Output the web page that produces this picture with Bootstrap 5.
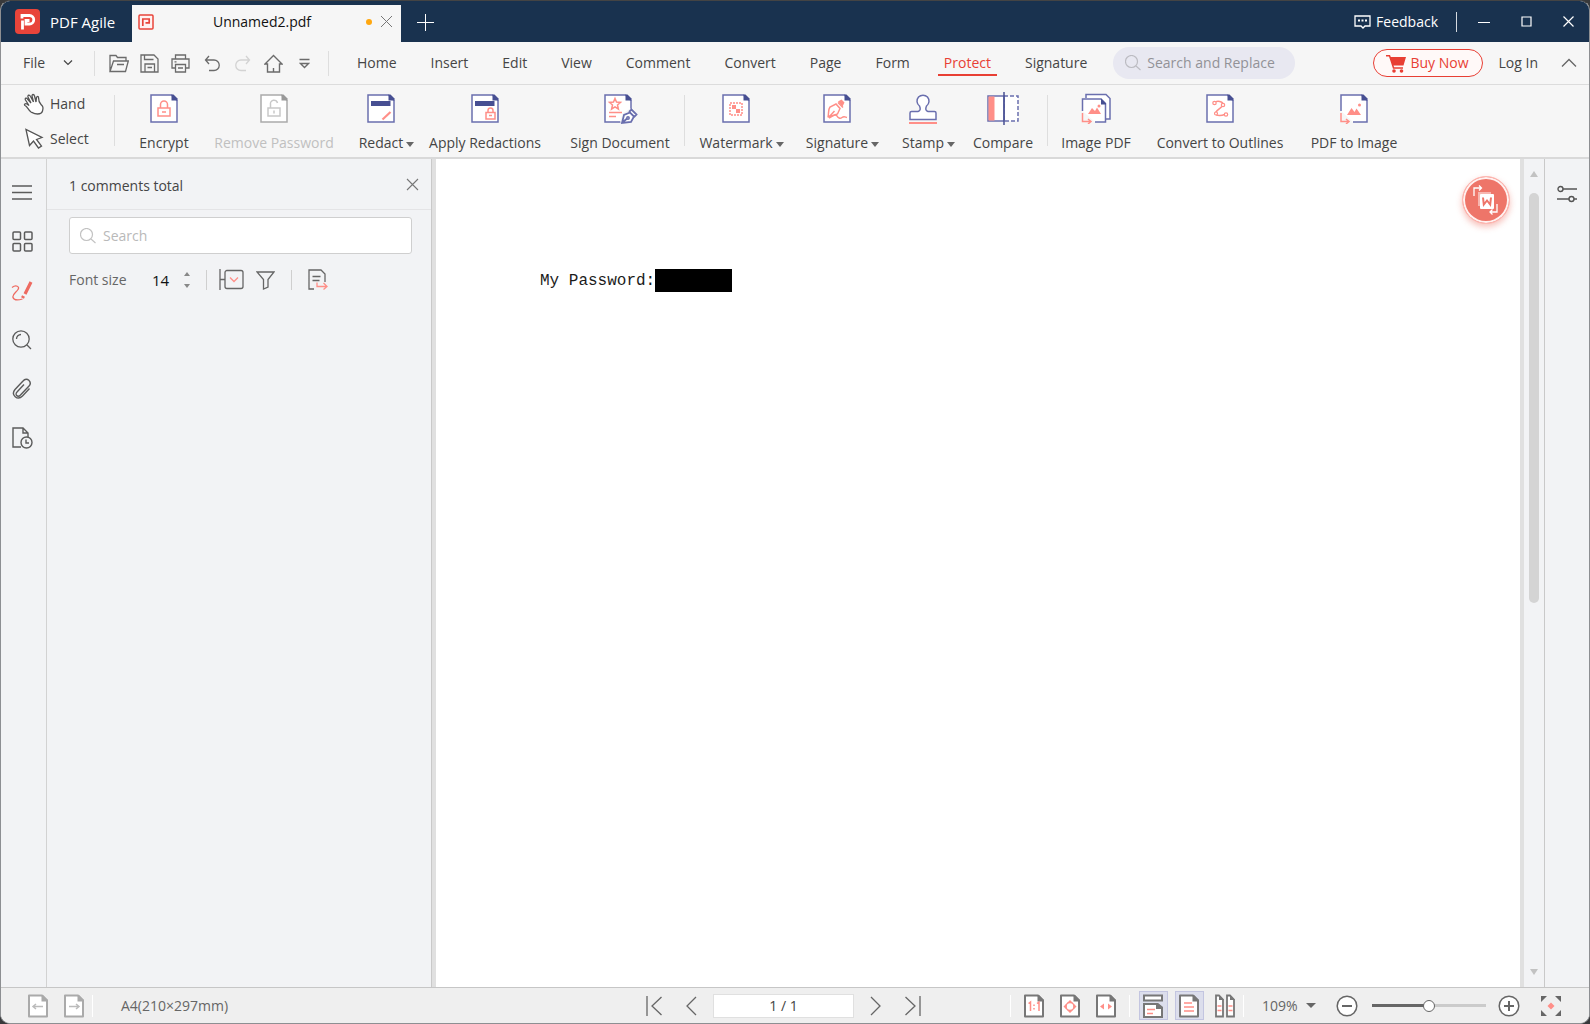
<!DOCTYPE html>
<html lang="en">
<head>
<meta charset="utf-8">
<meta name="viewport" content="width=device-width, initial-scale=1">
<title>PDF Agile</title>
<link rel="stylesheet" href="https://cdn.jsdelivr.net/npm/bootstrap@5.3.0/dist/css/bootstrap.min.css">
<style>
  :root { --ink:#454545; --coral:#ff8f88; --indigo:#6a6fae; --indigo-dark:#474f92; --red:#e83f34; --line:#d2d2d2; --soft:#f2f3f5; }
  html { background:#38393b; }
  body { font:14px/20px "Open Sans","Noto Sans",sans-serif; color:var(--ink); background:#38393b; height:100vh; overflow:hidden; }
  button, input, select { font:inherit; color:inherit; }
  svg { display:block; flex:none; }
  svg:not([fill]) { fill:none; }
  svg:not([stroke]) { stroke:currentColor; }
  svg:not([stroke-width]) { stroke-width:1.5; }
  .plain { border:0; background:none; padding:0; }
  .app-window { height:100vh; border:1px solid #8d8f92; border-top-color:#444; border-radius:10px; overflow:hidden; background:#f6f6f6; }

  .title-bar { height:41px; background:#19324f; color:#fff; }
  .brand-box { width:131px; padding-left:14px; gap:10px; font-size:15px; }
  .doc-tab { width:269px; height:37px; background:#f6f6f6; color:#111; padding:0 8px 4px 6px; }
  .dirty-dot { width:6px; height:6px; border-radius:50%; background:#ffa70f; margin-right:8px; }
  .new-tab { width:48px; height:40px; }
  .title-rule { width:1px; height:20px; background:#d5dae0; margin:0 6px 0 18px; }
  .win-btn { width:42px; height:40px; }

  .menu-bar { height:43px; border-bottom:1px solid #dcdcdc; }
  .file-btn { padding-left:22px; width:93px; gap:18px; }
  .v-rule { width:1px; background:#dedede; flex:none; }
  .v-rule.short { height:20px; background:#cfcfcf; }
  .v-rule.mid { height:25px; }
  .v-rule.tall { height:51px; margin-top:10px; }
  .quick { width:31px; height:31px; color:#6b6b6b; }
  .quick:disabled { color:#d3d3d3; }
  .menu-tabs { gap:22px; padding-left:22px; }
  .menu-tabs .nav-link { padding:3px 6px 1px; color:var(--ink); border-bottom:2px solid transparent; line-height:20px; }
  .menu-tabs .nav-link.active { color:var(--red); border-color:var(--red); }
  .pill-search { width:182px; height:32px; border-radius:16px; background:#e8e8f1; padding:0 4px 0 12px; margin-left:20px; gap:6px; color:#bcbcc2; }
  .pill-search input, .note-search input { min-width:0; flex:1; border:0; background:none; outline:0; padding:0; }
  .pill-search input::placeholder { color:#929297; opacity:1; }
  .buy-btn { width:110px; height:28px; border:1px solid var(--red); border-radius:14px; color:var(--red); background:#fff9f8; gap:4px; padding:0; }
  .collapse-btn { margin:0 12px 0 23px; color:#666; }

  .ribbon { height:74px; border-bottom:2px solid #d9d9d9; }
  .mode-col { width:113px; padding:1px 0 0 22px; }
  .mode-btn { height:35px; gap:4px; color:#555; }
  .mode-btn span { color:var(--ink); }
  .first-tools { margin-left:13px; }
  .tool { height:67px; color:var(--indigo); }
  .tool span { display:block; margin-top:9px; color:var(--ink); white-space:nowrap; }
  .tool .caret::after { content:""; display:inline-block; border:4px solid transparent; border-top:5px solid #666; border-bottom:0; margin:0 -11px 1px 3px; }
  .tool:disabled { color:#aaa; --coral:#c8c8c8; --indigo-dark:#999; }
  .tool:disabled span { color:#c0c0c0; }
  .t-66 { width:66px; } .t-72 { width:72px; } .t-88 { width:88px; } .t-96 { width:96px; } .t-100 { width:100px; } .t-102 { width:102px; }
  .t-116 { width:116px; } .t-128 { width:128px; } .t-142 { width:142px; } .t-148 { width:148px; } .t-152 { width:152px; }

  .body-row { min-height:0; }
  .rail { width:46px; background:var(--soft); border-right:1px solid var(--line); padding-top:9px; flex:none; }
  .rail button { width:42px; height:49px; color:#5b5b5b; }
  .notes { width:385px; background:var(--soft); border-right:1px solid #c9c9c9; flex:none; }
  .notes-head { height:51px; border-bottom:1px solid #e4e4e6; padding:0 12px 0 22px; }
  .note-search { margin:7px 19px 0 22px; height:37px; background:#fff; border:1px solid #cfcfcf; border-radius:3px; padding:0 10px; gap:7px; color:#c2c2c2; }
  .note-search input::placeholder { color:#b9b9b9; opacity:1; }
  .note-tools { height:51px; padding-left:22px; color:#666; }
  .size-input { width:30px; border:0; background:none; color:#111; padding:0; margin-left:19px; text-align:center; font-size:15px; appearance:textfield; -moz-appearance:textfield; }
  .size-input::-webkit-inner-spin-button { appearance:none; -webkit-appearance:none; }
  .page-area { background:#fff; border-left:4px solid #e0e0e0; border-right:4px solid #e0e0e0; min-width:0; }
  .page-line { margin:110px 0 0 104px; font:16px/25px "Liberation Mono",monospace; color:#1b1b1b; }
  .redacted { display:inline-block; width:77px; height:23px; background:#000; vertical-align:top; }
  .float-btn { top:17px; right:10px; width:48px; height:48px; border-radius:50%; background:#ee7569; border:1px solid #ffb9b3; box-shadow:inset 0 0 0 2px #fff1f0, 0 3px 6px rgba(238,117,105,.45); color:#fff; padding:0; }
  .scroll-col { width:21px; background:var(--soft); border-right:1px solid #c9c9c9; padding:12px 0 12px; color:#c2c2c2; flex:none; }
  .scroll-track { flex:1; width:10px; margin:16px 0 16px; }
  .scroll-thumb { width:10px; height:54%; border-radius:5px; background:#d4d4d4; }
  .side-rail { width:44px; background:var(--soft); padding-top:10px; flex:none; }
  .side-rail button { width:44px; height:49px; color:#555; }

  .status-bar { height:36px; border-top:1px solid #c6c6c6; background:#efefef; color:#666; flex:none; }
  .status-left { padding-left:19px; }
  .paper-size { margin-left:28px; }
  .pager { gap:22px; margin-right:84px; }
  .status-btn { width:36px; height:30px; color:#777; }
  .status-btn i { width:29px; height:29px; border:1px solid transparent; display:flex; align-items:center; justify-content:center; }
  .status-btn.on i { background:#dcdeec; border-color:#c3c5e0; }
  .light-rule { width:1px; height:22px; background:#fff; }
  .light-rule.spaced { margin:0 5px; }
  .page-input { width:141px; height:24px; border:1px solid #e0e0e0; background:#fff; text-align:center; color:#444; padding:0; margin:0 -6px; }
  .zoom-select { width:60px; border:0; appearance:none; background:none; padding:0 6px 0 0; margin-left:18px; outline:0; }
  .zoom-caret { margin-left:-16px; pointer-events:none; }
  .zoom-range { appearance:none; -webkit-appearance:none; width:114px; height:14px; margin:0 12px 0 14px; background:linear-gradient(#666,#666) 0 50%/50% 3px no-repeat, linear-gradient(#cbcbcb,#cbcbcb) 0 50%/100% 3px no-repeat; }
  .zoom-range::-webkit-slider-thumb { -webkit-appearance:none; width:12px; height:12px; border-radius:50%; background:#fff; border:1px solid #666; }
  .full-btn { margin:0 27px 0 20px; }
</style>
<script src="https://cdn.jsdelivr.net/npm/bootstrap@5.3.0/dist/js/bootstrap.bundle.min.js"></script>
</head>
<body>
<svg width="0" height="0" class="position-absolute">
  <symbol id="doc" viewBox="0 0 32 32"><path d="M3 3h20.500l5.500 5.500v21.500H3z" fill="#fff" stroke="currentColor" stroke-width="1.500"/><path d="M23.500 2.500h2l4 4v2h-6z" fill="var(--indigo-dark)" stroke="none"/></symbol>
  <symbol id="page" viewBox="0 0 22 24"><path d="M2 1.500h13l5 5v16H2z" fill="#fff" stroke="currentColor" stroke-width="2" stroke-linejoin="round"/><path d="M14.500 1h1.500l5 5v1.500h-6.500z" fill="currentColor" stroke="none"/></symbol>
  <symbol id="lens" viewBox="0 0 16 16"><circle cx="6.500" cy="6.500" r="6" stroke="currentColor" stroke-width="1.200"/><path d="M11 11l4.500 4" stroke="currentColor" stroke-width="1.200"/></symbol>
</svg>

<div class="app-window d-flex flex-column">
  <header class="title-bar d-flex align-items-end flex-shrink-0">
    <div class="brand-box d-flex align-items-center align-self-center">
      <svg width="25" height="25" viewBox="0 0 25 25" stroke="none"><rect width="25" height="25" rx="4" fill="#e8443a"/><path d="M7 9.500V6.500h7.500a4 4 0 0 1 0 8.500H11v-3.500h3.500M7.500 11.500v9" stroke="#fff" stroke-width="2.800"/></svg>
      <span>PDF Agile</span>
    </div>
    <div class="doc-tab d-flex align-items-center">
      <svg width="16" height="16" viewBox="0 0 16 16" stroke="#e8443a"><rect x="1" y="1" width="14" height="14" rx="1" fill="#fff2f1"/><path d="M4.800 12V5M4 5h8M11.200 5v3.800M12 8.800H7.500" stroke-width="1.700"/></svg>
      <span class="flex-grow-1 text-center ps-1">Unnamed2.pdf</span>
      <span class="dirty-dot"></span>
      <button class="plain" aria-label="Close tab"><svg width="13" height="13" viewBox="0 0 13 13" stroke="#777" stroke-width="1"><path d="M1 1l11 11M12 1L1 12"/></svg></button>
    </div>
    <button class="plain new-tab d-flex align-items-center justify-content-center" aria-label="New tab"><svg width="17" height="17" viewBox="0 0 17 17" stroke-width="1" stroke="#fff"><path d="M8.500 0v17M0 8.500h17"/></svg></button>
    <div class="ms-auto d-flex align-items-center align-self-center">
      <button class="plain d-flex align-items-center text-white gap-1"><svg width="18" height="16" viewBox="0 0 18 16" stroke-width="1.300"><path d="M1 2h15v10h-5l-2 2-2-2H1z"/><path d="M4 6.500h2M7.500 6.500h2M11 6.500h2" stroke-width="2"/></svg>Feedback</button>
      <span class="title-rule"></span>
      <button class="plain win-btn d-flex align-items-center justify-content-center text-white" aria-label="Minimize"><svg width="12" height="12" viewBox="0 0 12 12"><path d="M0 6.500h12" stroke-width="1"/></svg></button>
      <button class="plain win-btn d-flex align-items-center justify-content-center text-white" aria-label="Maximize"><svg width="11" height="11" viewBox="0 0 11 11"><path d="M1 1h9v9H1z" stroke-width="1.200"/></svg></button>
      <button class="plain win-btn d-flex align-items-center justify-content-center text-white" aria-label="Close"><svg width="11" height="11" viewBox="0 0 11 11"><path d="M.5.5l10 10M10.500.5l-10 10" stroke-width="1.200"/></svg></button>
    </div>
  </header>

  <nav class="menu-bar d-flex align-items-center flex-shrink-0" aria-label="Main">
    <button class="plain file-btn d-flex align-items-center">File<svg width="10" height="8" viewBox="0 0 10 8" stroke-width="1.200"><path d="M1 1.500l4 4 4-4"/></svg></button>
    <span class="v-rule mid"></span>
    <div class="d-flex ps-2">
      <button class="plain quick d-flex align-items-center justify-content-center" aria-label="Open"><svg width="20" height="19" viewBox="0 0 20 19" stroke-width="1.300"><path d="M1 17.500V1.500h6l1.500 2H17V7M1 17.500L4.500 7H19.300l-2.800 10.500zM8 10.500h7"/></svg></button>
      <button class="plain quick d-flex align-items-center justify-content-center" aria-label="Save"><svg width="19" height="19" viewBox="0 0 19 19" stroke-width="1.300"><path d="M1 1h13l4 4v13H1zM4.500 1v4.500h9M5 18v-8h9.500v8M7.500 13.500h4.500"/></svg></button>
      <button class="plain quick d-flex align-items-center justify-content-center" aria-label="Print"><svg width="19" height="19" viewBox="0 0 19 19" stroke-width="1.300"><path d="M4.500 5V1h10v4M4.500 14H1V5h17v9h-3.500M4.500 10.500h10V18h-10zM7 14h5M3.500 7.800h2"/></svg></button>
      <button class="plain quick d-flex align-items-center justify-content-center" aria-label="Undo"><svg width="16" height="17" viewBox="0 0 16 17" stroke-width="1.300"><path d="M5 1L1.500 5 5 9M1.500 5H10a5 5 0 0 1 0 10.500H5"/></svg></button>
      <button class="plain quick d-flex align-items-center justify-content-center" aria-label="Redo" disabled><svg width="16" height="17" viewBox="0 0 16 17" stroke-width="1.300"><path d="M11 1l3.500 4L11 9M14.500 5H6a5 5 0 0 0 0 10.500h5"/></svg></button>
      <button class="plain quick d-flex align-items-center justify-content-center" aria-label="Start page"><svg width="19" height="19" viewBox="0 0 19 19" stroke-width="1.400"><path d="M3.500 10H1L9.500 1.500 18 10h-2.500v8h-12zM9.500 18v-4"/></svg></button>
      <button class="plain quick d-flex align-items-center justify-content-center" aria-label="More"><svg width="11" height="11" viewBox="0 0 11 11" stroke-width="1.300"><path d="M.5 1.500h10M1.500 5.500h8l-4 4z"/></svg></button>
    </div>
    <span class="v-rule mid ms-2"></span>
    <div class="nav menu-tabs flex-nowrap">
      <a class="nav-link" href="#">Home</a><a class="nav-link" href="#">Insert</a><a class="nav-link" href="#">Edit</a><a class="nav-link" href="#">View</a><a class="nav-link" href="#">Comment</a><a class="nav-link" href="#">Convert</a><a class="nav-link" href="#">Page</a><a class="nav-link" href="#">Form</a><a class="nav-link active" href="#" aria-current="page">Protect</a><a class="nav-link" href="#">Signature</a>
    </div>
    <label class="pill-search d-flex align-items-center"><svg width="16" height="16"><use href="#lens"/></svg><input type="text" placeholder="Search and Replace" aria-label="Search and Replace"></label>
    <div class="ms-auto d-flex align-items-center">
      <button class="buy-btn d-flex align-items-center justify-content-center"><svg width="20" height="19" viewBox="0 0 20 19" fill="currentColor" stroke="none"><path d="M0 1h4l.8 2H20l-2.500 8.500H7.500l.6 1.800H17v1.500H7L3 2.500H0z"/><circle cx="8" cy="17" r="1.800"/><circle cx="15.500" cy="17" r="1.800"/></svg>Buy Now</button>
      <a href="#" class="text-reset text-decoration-none ms-3">Log In</a>
      <button class="plain collapse-btn" aria-label="Collapse ribbon"><svg width="16" height="10" viewBox="0 0 16 10" stroke-width="1.300"><path d="M1 8.500l7-7 7 7"/></svg></button>
    </div>
  </nav>

  <section class="ribbon d-flex flex-shrink-0" aria-label="Protect tools">
    <div class="mode-col">
      <button class="plain mode-btn d-flex align-items-center"><svg width="23" height="22" viewBox="0 0 23 22" stroke-width="1.300"><path d="M8 19C5 17 4.500 13.500 2 12.500c-1.500-1 .5-2.500 2-1.500l2 1.500L2.500 7C1.500 5 3.500 4.500 4.500 6L8 10 5 4C4.500 2 6.500 1.500 7.500 3.500l3 5.500-1.500-6c0-2 2-2 2.500 0l1.500 6 .5-4.500c.5-1.500 2-1.500 2 0 0 3 .5 5 2.500 7s2.500 3 1.500 6.500c-.5 2-2 3-5 3S10 20 8 19z" fill="#fff"/></svg><span>Hand</span></button>
      <button class="plain mode-btn d-flex align-items-center"><svg width="23" height="22" viewBox="0 0 23 22" stroke-width="1.300"><path d="M3 1.500l3.500 16 4-4.500 5 7 3-2-5-6.500 5.500-2z" fill="#fff"/></svg><span>Select</span></button>
    </div>
    <span class="v-rule tall"></span>
    <div class="d-flex first-tools pt-1">
      <button class="plain tool t-72"><svg class="mx-auto" width="32" height="32"><use href="#doc"/><g stroke="var(--coral)"><path d="M10 16h12v8H10zM12.500 16v-3.500a3.500 3.500 0 0 1 7 0V16M14 20h4"/></g></svg><span>Encrypt</span></button>
      <button class="plain tool t-148" disabled><svg class="mx-auto" width="32" height="32"><use href="#doc"/><g stroke="var(--coral)"><path d="M10 16h12v8H10zM12.500 16v-3.500a3.500 3.500 0 0 1 7-1.500M16 18.500v3"/></g></svg><span>Remove Password</span></button>
      <button class="plain tool t-66"><svg class="mx-auto" width="32" height="32"><use href="#doc"/><path d="M6 11.500h19.500" stroke="var(--indigo-dark)" stroke-width="5"/><path d="M17.500 27.500l8-7.500" stroke="var(--coral)" stroke-width="2.200"/></svg><span class="caret">Redact</span></button>
      <button class="plain tool t-142"><svg class="mx-auto" width="32" height="32"><use href="#doc"/><path d="M6 11.500h19.500" stroke="var(--indigo-dark)" stroke-width="5"/><path d="M17 20.500h9V27h-9zM19 20.500v-2a2.500 2.500 0 0 1 5 0v2M20 23.500h3" stroke="var(--coral)"/></svg><span>Apply Redactions</span></button>
      <button class="plain tool t-128"><svg class="mx-auto overflow-visible" width="32" height="32"><use href="#doc" x="-2"/><path d="M11 6.500l1.500 3.500 4 .4-3 2.600.9 4-3.400-2.200L7.600 17l.9-4-3-2.600 4-.4zM5 20.500h13M5 24.500h7" stroke="var(--coral)"/><path d="M18 31l2-8 6-4 4 4-3 6-8.500 3" fill="#f6f6f6" stroke="#f6f6f6" stroke-width="4"/><path d="M18 31l2-8 6-2.500 4 4L27 30zM25 20l2.500-2.500 5 5-2.500 2.500M18 31l5-4.500" fill="#fff" stroke-width="1.800"/><circle cx="24" cy="26" r="1.200"/></svg><span>Sign Document</span></button>
    </div>
    <span class="v-rule tall"></span>
    <div class="d-flex pt-1">
      <button class="plain tool t-102"><svg class="mx-auto" width="32" height="32"><use href="#doc"/><rect x="10" y="11" width="12" height="12" stroke="var(--coral)" stroke-dasharray="2 1"/><path d="M12 13h4v4h4v4h-4v-4h-4z" fill="var(--coral)" stroke="none"/></svg><span class="caret">Watermark</span></button>
      <button class="plain tool t-100"><svg class="mx-auto" width="32" height="32"><use href="#doc"/><path d="M7 25.500c1-5 0-8 2-10.500l6-3 4 4.500-2.500 5.500L7.500 25M8 25l5.500-6M17 10.500l5 5" stroke="var(--coral)"/><path d="M17 9.500l3.500-2 3 3-2 4z" fill="var(--coral)" stroke="none"/><path d="M8 26c5-3 7-4 8-2s3 3 5 1.500 3-.5 5 0" stroke="var(--coral)"/></svg><span class="caret">Signature</span></button>
      <button class="plain tool t-72"><svg class="mx-auto" width="32" height="32" viewBox="0 0 32 32"><path d="M3 27.500v-6.500q0-1.500 1.500-1.500H11q3.500-1 1.500-5.500a6 6 0 1 1 7 0q-2 4.500 1.500 5.500h6.500q1.500 0 1.500 1.500v6.500z" fill="#fff"/><path d="M2 31h28" stroke="var(--coral)" stroke-width="2"/></svg><span class="caret">Stamp</span></button>
      <button class="plain tool t-88"><svg class="mx-auto overflow-visible" width="32" height="32" viewBox="0 0 32 32"><path d="M17 4h14v25H17z" fill="#fff" stroke-dasharray="4 2"/><path d="M1 4h16v25H1z" fill="#fff"/><path d="M1.500 4.500h6v24h-6z" fill="var(--coral)" stroke="none"/><path d="M17 0v33" stroke="var(--indigo-dark)"/></svg><span>Compare</span></button>
    </div>
    <span class="v-rule tall"></span>
    <div class="d-flex pt-1">
      <button class="plain tool t-96"><svg class="mx-auto" width="32" height="32" viewBox="0 0 32 32"><path d="M6 6V2.500h20l4 4V27h-4" fill="#fff"/><path d="M2.500 19V7H21l4.500 4.500V30H15" fill="#fff"/><path d="M21 6.500l5 5v1h-5z" fill="var(--indigo-dark)" stroke="none"/><path d="M8 22l4-6 3 3 2-3.500 4 6.500z" fill="var(--coral)" stroke="none"/><circle cx="19" cy="14" r="1.500" fill="var(--coral)" stroke="none"/><path d="M2.500 21v8.500H10M8 27l3 2.500L8 32" stroke="var(--coral)"/></svg><span>Image PDF</span></button>
      <button class="plain tool t-152"><svg class="mx-auto" width="32" height="32"><use href="#doc"/><path d="M10 11c3-3 9-1.500 9 1.500S10 19 11.500 22c1 2 6 2 9 .5" stroke="var(--coral)"/><g fill="#fff" stroke="var(--coral)" stroke-width="1.200"><circle cx="10.500" cy="11" r="1.700"/><circle cx="19" cy="13" r="1.700"/><circle cx="12" cy="21.500" r="1.500"/><circle cx="22" cy="22.500" r="1.700"/></g></svg><span>Convert to Outlines</span></button>
      <button class="plain tool t-116"><svg class="mx-auto" width="32" height="32" viewBox="0 0 32 32"><path d="M3 19V3h20.500L29 8.500V30H15" fill="#fff"/><path d="M23.500 2.500h2l4 4v2h-6z" fill="var(--indigo-dark)" stroke="none"/><path d="M9 23l4.500-7 3 4 2-3.500 4.500 6.500z" fill="var(--coral)" stroke="none"/><circle cx="21.500" cy="13" r="1.500" fill="var(--coral)" stroke="none"/><path d="M3 21v8.500h7M8 27l3 2.500L8 32" stroke="var(--coral)"/></svg><span>PDF to Image</span></button>
    </div>
  </section>

  <main class="body-row d-flex flex-grow-1">
    <div class="rail d-flex flex-column">
      <button class="plain d-flex align-items-center justify-content-center" aria-label="Menu"><svg width="20" height="15" viewBox="0 0 20 15" stroke-width="1.300"><path d="M0 1h20M0 7.500h20M0 14h20"/></svg></button>
      <button class="plain d-flex align-items-center justify-content-center" aria-label="Thumbnails"><svg width="21" height="21" viewBox="0 0 21 21"><rect x="1" y="1" width="7.500" height="7.500" rx="1"/><rect x="12.500" y="1" width="7.500" height="7.500" rx="1"/><rect x="1" y="12.500" width="7.500" height="7.500" rx="1"/><rect x="12.500" y="12.500" width="7.500" height="7.500" rx="1"/></svg></button>
      <button class="plain d-flex align-items-center justify-content-center" aria-label="Comments"><svg width="22" height="20" viewBox="0 0 22 20" stroke="#ee6a61"><path d="M1 6.500c4-3 8-1 6 2s-6 5-5 8 6 2.500 9.500 1.500" stroke-width="1.300"/><path d="M20 1l-6 12M12.500 15l-1 2" stroke-width="3.200"/></svg></button>
      <button class="plain d-flex align-items-center justify-content-center" aria-label="Search"><svg width="20" height="20" viewBox="0 0 20 20" stroke-width="1.300"><circle cx="9" cy="9" r="8.200"/><path d="M15 15l4 4M4.500 9A4.500 4.500 0 0 1 9 4.500"/></svg></button>
      <button class="plain d-flex align-items-center justify-content-center" aria-label="Attachments"><svg width="20" height="21" viewBox="0 0 20 21" stroke-width="1.400"><path d="M17.500 10.500l-7 7.500c-5 5-12-1-7.500-6.500l8-8.500c4-4.500 9.500 1 6 5l-8.500 9c-3 3-6-.5-3.500-3l7-7.500"/></svg></button>
      <button class="plain d-flex align-items-center justify-content-center" aria-label="History"><svg width="21" height="22" viewBox="0 0 21 22" stroke-width="1.400"><path d="M9 20H1V1h10l5 5v4M11 1v5h5"/><circle cx="14.500" cy="15.500" r="5.500" fill="#f2f3f5"/><path d="M14 12.500V16h3"/></svg></button>
    </div>

    <aside class="notes">
      <div class="notes-head d-flex align-items-center justify-content-between"><span class="pt-1">1 comments total</span><button class="plain" aria-label="Close panel"><svg width="13" height="13" viewBox="0 0 13 13" stroke="#777" stroke-width="1.100"><path d="M1 1l11 11M12 1L1 12"/></svg></button></div>
      <label class="note-search d-flex align-items-center"><svg width="16" height="16"><use href="#lens"/></svg><input type="text" placeholder="Search" aria-label="Search comments"></label>
      <div class="note-tools d-flex align-items-center">
        <label for="fontSize">Font size</label>
        <input id="fontSize" class="size-input" type="number" value="14">
        <div class="d-flex flex-column gap-2 ms-2">
          <button class="plain" aria-label="Larger"><svg width="6" height="4" viewBox="0 0 6 4"><path d="M0 4l3-4 3 4z" fill="#888" stroke="none"/></svg></button>
          <button class="plain" aria-label="Smaller"><svg width="6" height="4" viewBox="0 0 6 4"><path d="M0 0l3 4 3-4z" fill="#888" stroke="none"/></svg></button>
        </div>
        <span class="v-rule short ms-3"></span>
        <button class="plain ms-2 ps-1" aria-label="Expand all"><svg width="25" height="21" viewBox="0 0 25 21" stroke-width="1.300"><path d="M1 0v21M1 10.500h5"/><rect x="6" y="1.500" width="18" height="18" rx="2"/><path d="M11 8.500l4 4 4-4" stroke="var(--coral)"/></svg></button>
        <button class="plain ms-2 ps-1" aria-label="Filter"><svg width="19" height="20" viewBox="0 0 19 20" stroke-width="1.300"><path d="M1 2h17l-6 7.500V17l-4.500 2V9.500z"/></svg></button>
        <span class="v-rule short ms-3"></span>
        <button class="plain ms-3" aria-label="Export comments"><svg width="20" height="21" viewBox="0 0 20 21" stroke-width="1.300"><path d="M6 20H1V1h12l4 4v8M4.500 7.500h8M4.500 11.500h7"/><path d="M9 13.500v4h10M15.500 14l3.500 3.500-3.500 3" stroke="var(--coral)"/></svg></button>
      </div>
    </aside>

    <div class="page-area flex-grow-1 position-relative">
      <div class="page-line">My Password:<span class="redacted"></span></div>
      <button class="float-btn position-absolute d-flex align-items-center justify-content-center" aria-label="Convert to Word"><svg width="28" height="30" viewBox="0 0 28 30"><path d="M2 11V3h7M7 .5L9.500 3 7 5.500M25 19v8h-7M20.500 24.500L18 27l2.500 2.500" stroke-width="1.300"/><path d="M6 7h13v14H6z" fill="#f7b6b0" stroke="none"/><rect x="8" y="9" width="14" height="15" rx="1" fill="#fff" stroke="none"/><path d="M11 12.500l.8 7 3.200-4 3.200 4 .8-7" stroke="#ee7569" stroke-width="2"/></svg></button>
    </div>
    <div class="scroll-col d-flex flex-column align-items-center">
      <svg width="8" height="6" viewBox="0 0 8 6"><path d="M0 6l4-6 4 6z" fill="currentColor" stroke="none"/></svg>
      <div class="scroll-track"><div class="scroll-thumb"></div></div>
      <svg width="8" height="6" viewBox="0 0 8 6"><path d="M0 0l4 6 4-6z" fill="currentColor" stroke="none"/></svg>
    </div>
    <div class="side-rail"><button class="plain d-flex align-items-center justify-content-center" aria-label="Properties"><svg width="20" height="18" viewBox="0 0 20 18" stroke-width="1.400"><circle cx="3.500" cy="4" r="2.500"/><path d="M6 4h14M0 14h12M17 14h3"/><circle cx="14.500" cy="14" r="2.500"/></svg></button></div>
  </main>

  <footer class="status-bar d-flex align-items-center">
    <div class="status-left d-flex align-items-center flex-grow-1">
      <button class="status-btn plain d-flex align-items-center justify-content-center" aria-label="Previous view"><svg width="22" height="24" color="#aaa"><use href="#page"/><path d="M6 12.500h10M9 10l-3 2.500L9 15" stroke="#bbb"/></svg></button>
      <button class="status-btn plain d-flex align-items-center justify-content-center" aria-label="Next view"><svg width="22" height="24" color="#aaa"><use href="#page"/><path d="M6 12.500h10M13 10l3 2.500-3 2.500" stroke="#bbb"/></svg></button>
      <span class="light-rule"></span>
      <span class="paper-size">A4(210×297mm)</span>
    </div>
    <div class="pager d-flex align-items-center">
      <button class="plain" aria-label="First page"><svg width="17" height="20" viewBox="0 0 17 20" stroke-width="1.300"><path d="M1 0v20M15.500 1L6 10l9.500 9"/></svg></button>
      <button class="plain" aria-label="Previous page"><svg width="12" height="20" viewBox="0 0 12 20" stroke-width="1.300"><path d="M11 1l-9 9 9 9"/></svg></button>
      <input class="page-input" type="text" value="1 / 1" aria-label="Page">
      <button class="plain" aria-label="Next page"><svg width="12" height="20" viewBox="0 0 12 20" stroke-width="1.300"><path d="M1 1l9 9-9 9"/></svg></button>
      <button class="plain" aria-label="Last page"><svg width="17" height="20" viewBox="0 0 17 20" stroke-width="1.300"><path d="M16 0v20M1.500 1L11 10l-9.500 9"/></svg></button>
    </div>
    <div class="d-flex align-items-center">
      <span class="light-rule spaced"></span>
      <button class="status-btn plain d-flex align-items-center justify-content-center" aria-label="Actual size"><svg width="22" height="24"><use href="#page"/><path d="M5.500 9.500l2-1.500v9M14 9.500l2-1.500v9M11 10.500v1.500M11 14v1.500" stroke="var(--coral)"/></svg></button>
      <button class="status-btn plain d-flex align-items-center justify-content-center" aria-label="Fit page"><svg width="22" height="24"><use href="#page"/><circle cx="11" cy="12.500" r="4" stroke="var(--coral)"/><path d="M11 6l3 3H8zM11 19l3-3H8zM4.500 12.500l3-3v6zM17.500 12.500l-3-3v6z" fill="var(--coral)" stroke="none"/></svg></button>
      <button class="status-btn plain d-flex align-items-center justify-content-center" aria-label="Fit width"><svg width="22" height="24"><use href="#page"/><path d="M5 12.500l4-3v6zM17 12.500l-4-3v6z" fill="var(--coral)" stroke="none"/></svg></button>
      <span class="light-rule spaced"></span>
      <button class="status-btn on plain d-flex align-items-center justify-content-center" aria-label="Continuous"><i><svg width="22" height="24" viewBox="0 0 22 24"><path d="M2 1.500h18v5H2zM2 23V10h13l5 4v9z" fill="#fff" stroke-width="2"/><path d="M14 9h2l5 4v2h-7z" fill="currentColor" stroke="none"/><path d="M5 15.500h8M5 19.500h6" stroke="var(--coral)"/></svg></i></button>
      <button class="status-btn on plain d-flex align-items-center justify-content-center" aria-label="Single page"><i><svg width="22" height="24"><use href="#page"/><path d="M6 9h8M6 13h10M6 17h10" stroke="var(--coral)"/></svg></i></button>
      <button class="status-btn plain d-flex align-items-center justify-content-center" aria-label="Two pages"><i><svg width="22" height="24" viewBox="0 0 22 24"><path d="M2 1.500h3l4 4v17H2zM13 1.500h3l4 4v17h-7z" fill="#fff" stroke-width="1.800"/><path d="M5 1l5 5H5zM16 1l5 5h-5z" fill="currentColor" stroke="none"/><path d="M3.500 12h4M3.500 16.500h4M14.500 12h4M14.500 16.500h4" stroke="var(--coral)"/></svg></i></button>
      <span class="light-rule"></span>
      <select class="zoom-select" aria-label="Zoom"><option>109%</option></select>
      <svg class="zoom-caret" width="10" height="5" viewBox="0 0 10 5"><path d="M0 0h10L5 5z" fill="#666" stroke="none"/></svg>
      <button class="plain ms-3 ps-1" aria-label="Zoom out"><svg width="22" height="22" viewBox="0 0 22 22"><circle cx="11" cy="11" r="9.800" fill="#fff"/><path d="M6 11h10" stroke-width="2"/></svg></button>
      <input class="zoom-range" type="range" min="0" max="100" value="50" aria-label="Zoom level">
      <button class="plain" aria-label="Zoom in"><svg width="22" height="22" viewBox="0 0 22 22"><circle cx="11" cy="11" r="9.800" fill="#fff"/><path d="M6 11h10M11 6v10" stroke-width="2"/></svg></button>
      <button class="plain full-btn" aria-label="Full screen"><svg width="22" height="22" viewBox="0 0 22 22"><path d="M1 1h6L1 7zM21 1v6l-6-6zM1 21v-6l6 6zM21 21h-6l6-6z" fill="#666" stroke="none"/><path d="M11 7.500l3.500 3.500-3.500 3.500L7.500 11z" fill="var(--coral)" stroke="none"/></svg></button>
    </div>
  </footer>
</div>
</body>
</html>
